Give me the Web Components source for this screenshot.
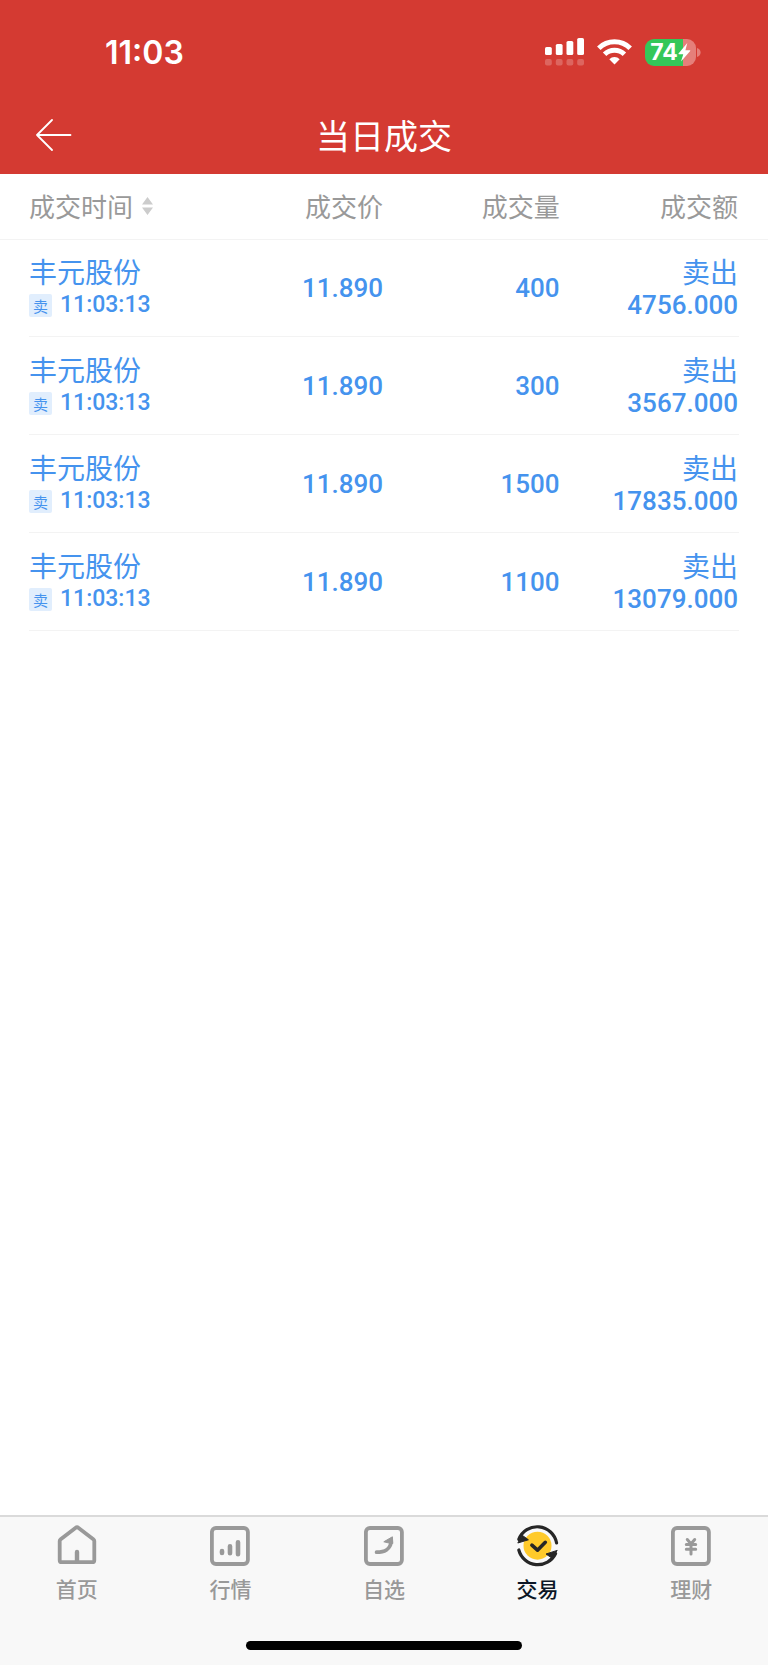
<!DOCTYPE html>
<html lang="zh-CN">
<head>
<meta charset="UTF-8">
<meta name="viewport" content="width=device-width, initial-scale=1">
<title>当日成交</title>
<style>
    :root {
        --brand: #d43a32;
        --sell: #4593ee;
        --muted: #999;
        --line: #f3f3f3;
        --gutter: 29px;
        --number-font: Roboto, 'Liberation Sans', sans-serif;
        --status-font: Inter, 'Liberation Sans', sans-serif;
    }
    body {
        margin: 0;
        min-height: 100vh;
        display: flex;
        flex-direction: column;
        background: #fff;
        font-family: 'Noto Sans CJK SC', sans-serif;
    }
    trade-table {
        flex: 1;
    }
</style>
</head>
<body>
    <status-bar time="11:03" battery="74"></status-bar>
    <nav-header>当日成交</nav-header>
    <trade-table></trade-table>
    <tab-bar>
        <tab-item icon="home">首页</tab-item>
        <tab-item icon="market">行情</tab-item>
        <tab-item icon="watch">自选</tab-item>
        <tab-item icon="trade" active>交易</tab-item>
        <tab-item icon="wealth">理财</tab-item>
    </tab-bar>

<script>
const trades = [
    { name: '丰元股份', time: '11:03:13', price: '11.890', volume: '400', amount: '4756.000' },
    { name: '丰元股份', time: '11:03:13', price: '11.890', volume: '300', amount: '3567.000' },
    { name: '丰元股份', time: '11:03:13', price: '11.890', volume: '1500', amount: '17835.000' },
    { name: '丰元股份', time: '11:03:13', price: '11.890', volume: '1100', amount: '13079.000' }
];

const frame = '<rect x="3.9" y="4" width="36" height="36" rx="4"/>';

const icons = {
    home: `
        <g fill="none" stroke="#999" stroke-width="3.8" stroke-linejoin="round" stroke-linecap="round">
            <path d="M4.7 17.1Q4.7 16 5.7 15.2L20.4 3.9Q22 2.7 23.6 3.9L38.3 15.2Q39.3 16 39.3 17.1V36.2Q39.3 38.2 37.3 38.2H6.7Q4.7 38.2 4.7 36.2Z"/>
            <path d="M22 28V37" stroke-width="4.4"/>
        </g>`,
    market: `
        <g fill="none" stroke="#999" stroke-width="3.8" stroke-linecap="round">
            ${frame}
            <path d="M14 27V29M22 22.3V29.3M30 18.3V30.3" stroke-width="4.6"/>
        </g>`,
    watch: `
        <g fill="none" stroke="#999" stroke-width="3.8" stroke-linecap="round">
            ${frame}
            <path d="M14.6 28.2C22 28.2 28.6 25.4 29 17.5"/>
        </g>
        <path d="M30.4 12.8L21.8 17.8L27 19L30.8 19.5Z" fill="#999" stroke="#999" stroke-linejoin="round"/>`,
    trade: `
        <circle cx="21.5" cy="21.7" r="14" fill="#ffca2a"/>
        <g fill="none" stroke="#262626" stroke-width="3.2" stroke-linecap="round">
            <path d="M2.8 15.4A19.7 19.7 0 0 1 40.6 19"/>
            <path d="M2.8 26A19.7 19.7 0 0 0 39.6 29.5"/>
            <path d="M15.9 21.2L21.5 26.2L29.3 18.3" stroke-width="3.6" stroke-linejoin="round"/>
        </g>
        <path d="M6.4 11.4L12.4 15.8L1.8 19ZM35.8 34L30 30L41.2 26.4Z" fill="#262626" stroke="#262626" stroke-linejoin="round"/>`,
    wealth: `
        <g fill="none" stroke="#999" stroke-width="3.8" stroke-linecap="round">
            ${frame}
            <path d="M18.3 15.5L22 20L25.7 15.5M22 20V30M17.3 20.6H26.7M17.3 25.2H26.7" stroke-width="3"/>
        </g>`
};

class StatusBar extends HTMLElement {
    constructor() {
        super();
        this.attachShadow({ mode: 'open' });
    }

    connectedCallback() {
        const time = this.getAttribute('time');
        const battery = this.getAttribute('battery');

        this.shadowRoot.innerHTML = `
            <style>
                :host {
                    display: flex;
                    justify-content: space-between;
                    align-items: center;
                    height: 96px;
                    padding: 8px 67px 0 105px;
                    box-sizing: border-box;
                    background: var(--brand);
                    color: #fff;
                    font-family: var(--status-font);
                }
                time {
                    padding-top: 2px;
                    font-size: 32px;
                    line-height: 40px;
                    font-weight: 600;
                }
                .icons {
                    display: flex;
                    align-items: center;
                    gap: 13px;
                }
                svg {
                    display: block;
                }
                .battery {
                    display: flex;
                    align-items: center;
                    gap: 1px;
                }
                .level {
                    display: flex;
                    align-items: center;
                    justify-content: center;
                    width: 51px;
                    height: 27px;
                    border-radius: 9px;
                    background: linear-gradient(90deg, #34c759 ${battery}%, #e57f7a ${battery}%);
                    font-size: 23px;
                    line-height: 27px;
                    font-weight: 700;
                }
            </style>
            <time>${time}</time>
            <div class="icons">
                <svg width="39" height="28" viewBox="0 0 39 28" fill="#fff">
                    <rect y="9" width="6.8" height="8" rx="1.6"/>
                    <rect x="10.8" y="6" width="6.8" height="11" rx="1.6"/>
                    <rect x="21.5" y="3" width="6.8" height="14" rx="1.6"/>
                    <rect x="32.2" width="6.8" height="17" rx="1.6"/>
                    <g opacity=".22">
                        <rect y="21" width="6.8" height="6.4" rx="2"/>
                        <rect x="10.8" y="21" width="6.8" height="6.4" rx="2"/>
                        <rect x="21.5" y="21" width="6.8" height="6.4" rx="2"/>
                        <rect x="32.2" y="21" width="6.8" height="6.4" rx="2"/>
                    </g>
                </svg>
                <svg width="35" height="26" viewBox="0 0 35 26">
                    <g fill="none" stroke="#fff" stroke-width="5">
                        <path d="M1.8 9.2A22.6 22.6 0 0 1 33.2 9.2"/>
                        <path d="M7.6 15.3A14.2 14.2 0 0 1 27.4 15.3"/>
                    </g>
                    <path d="M17.5 25.4L12.3 20.2A7.4 7.4 0 0 1 22.7 20.2Z" fill="#fff"/>
                </svg>
                <div class="battery">
                    <div class="level">
                        <span>${battery}</span>
                        <svg width="13" height="19" viewBox="0 0 13 19" fill="#fff">
                            <path d="M9.3 0L0.5 10.6Q0.2 11.3 1 11.3H5.3L3 18.6L12.2 8Q12.6 7.2 11.8 7.2H7.4Z"/>
                        </svg>
                    </div>
                    <svg width="4" height="9" viewBox="0 0 4 9"><path d="M0 0Q3.6 1.4 3.6 4.5Q3.6 7.6 0 9Z" fill="#e57f7a"/></svg>
                </div>
            </div>
        `;
    }
}

class NavHeader extends HTMLElement {
    constructor() {
        super();
        this.attachShadow({ mode: 'open' });
        this.shadowRoot.innerHTML = `
            <style>
                :host {
                    display: grid;
                    grid-template-columns: 1fr auto 1fr;
                    align-items: center;
                    height: 78px;
                    padding: 0 24px;
                    box-sizing: border-box;
                    background: var(--brand);
                    color: #fff;
                }
                button {
                    justify-self: start;
                    padding: 12px;
                    border: 0;
                    background: none;
                }
                svg {
                    display: block;
                }
                h1 {
                    margin: 0;
                    font-size: 34px;
                    line-height: 48px;
                    font-weight: 400;
                }
            </style>
            <button type="button" aria-label="返回">
                <svg width="36" height="32" viewBox="0 0 36 32" fill="none" stroke="#fff" stroke-width="1.8" stroke-linecap="round" stroke-linejoin="round">
                    <path d="M16 1L1 16L16 31M1 16H34.5"/>
                </svg>
            </button>
            <h1><slot></slot></h1>
        `;
    }
}

class TradeTable extends HTMLElement {
    constructor() {
        super();
        this.attachShadow({ mode: 'open' });
    }

    connectedCallback() {
        this.shadowRoot.innerHTML = `
            <style>
                :host {
                    display: block;
                }
                table {
                    width: 100%;
                    table-layout: fixed;
                    border-collapse: collapse;
                }
                th, td {
                    box-sizing: border-box;
                    padding: 0 1px 0 0;
                    text-align: right;
                    font-weight: 400;
                }
                th {
                    height: 65px;
                    border-bottom: 1px solid var(--line);
                    color: var(--muted);
                    font-size: 26px;
                    line-height: 34px;
                }
                th:first-child, td:first-child {
                    width: 27%;
                    padding-left: var(--gutter);
                    text-align: left;
                }
                th:last-child, td:last-child {
                    width: 27%;
                    padding-right: 30px;
                }
                .sort {
                    display: flex;
                    align-items: center;
                    gap: 9px;
                    padding: 0;
                    border: 0;
                    background: none;
                    color: inherit;
                    font: inherit;
                }
                /* row divider stops at the gutters */
                tbody tr {
                    background: linear-gradient(var(--line), var(--line)) center bottom / calc(100% - 2 * var(--gutter)) 1px no-repeat;
                }
                td {
                    height: 98px;
                    color: var(--sell);
                    font-size: 28px;
                    line-height: 34px;
                }
                .pair {
                    display: grid;
                }
                .number {
                    font-family: var(--number-font);
                    font-size: 26px;
                    font-weight: 500;
                }
                .time {
                    display: flex;
                    align-items: center;
                    gap: 8px;
                    font-family: var(--number-font);
                    font-size: 23px;
                    font-weight: 500;
                }
                .tag {
                    width: 23px;
                    border-radius: 2px;
                    background: #e1eefd;
                    font-family: 'Noto Sans CJK SC', sans-serif;
                    font-size: 15px;
                    line-height: 23px;
                    font-weight: 400;
                    text-align: center;
                }
            </style>
            <table>
                <thead>
                    <tr>
                        <th scope="col">
                            <button class="sort" type="button">成交时间<svg width="11" height="18" viewBox="0 0 11 18" fill="#ccc"><path d="M5.5 0L11 7.5H0ZM0 10.5H11L5.5 18Z"/></svg></button>
                        </th>
                        <th scope="col">成交价</th>
                        <th scope="col">成交量</th>
                        <th scope="col">成交额</th>
                    </tr>
                </thead>
                <tbody>
                    ${trades.map(trade => `
                        <tr>
                            <td>
                                <div class="pair">
                                    <div>${trade.name}</div>
                                    <div class="time"><span class="tag">卖</span><span>${trade.time}</span></div>
                                </div>
                            </td>
                            <td class="number">${trade.price}</td>
                            <td class="number">${trade.volume}</td>
                            <td>
                                <div class="pair">
                                    <div>卖出</div>
                                    <div class="number">${trade.amount}</div>
                                </div>
                            </td>
                        </tr>
                    `).join('')}
                </tbody>
            </table>
        `;
    }
}

class TabBar extends HTMLElement {
    constructor() {
        super();
        this.attachShadow({ mode: 'open' });
        this.shadowRoot.innerHTML = `
            <style>
                :host {
                    display: block;
                    padding-bottom: 15px;
                    border-top: 2px solid #dadada;
                    background: #f8f8f8;
                }
                nav {
                    display: flex;
                    padding: 7px 0 38px;
                }
                .indicator {
                    width: 36%;
                    height: 9px;
                    margin: 0 auto;
                    border-radius: 5px;
                    background: #000;
                }
            </style>
            <nav><slot></slot></nav>
            <div class="indicator"></div>
        `;
    }
}

class TabItem extends HTMLElement {
    constructor() {
        super();
        this.attachShadow({ mode: 'open' });
    }

    connectedCallback() {
        const icon = this.getAttribute('icon');

        this.shadowRoot.innerHTML = `
            <style>
                :host {
                    flex: 1;
                    color: var(--muted);
                }
                :host([active]) {
                    color: #0b1626;
                }
                a {
                    display: flex;
                    flex-direction: column;
                    align-items: center;
                    gap: 6px;
                    color: inherit;
                    font-size: 21px;
                    line-height: 29px;
                    font-weight: 500;
                    text-decoration: none;
                }
                svg {
                    display: block;
                }
            </style>
            <a href="#${icon}">
                <svg width="44" height="44" viewBox="0 0 44 44">${icons[icon]}</svg>
                <slot></slot>
            </a>
        `;
    }
}

customElements.define('status-bar', StatusBar);
customElements.define('nav-header', NavHeader);
customElements.define('trade-table', TradeTable);
customElements.define('tab-bar', TabBar);
customElements.define('tab-item', TabItem);
</script>
</body>
</html>
